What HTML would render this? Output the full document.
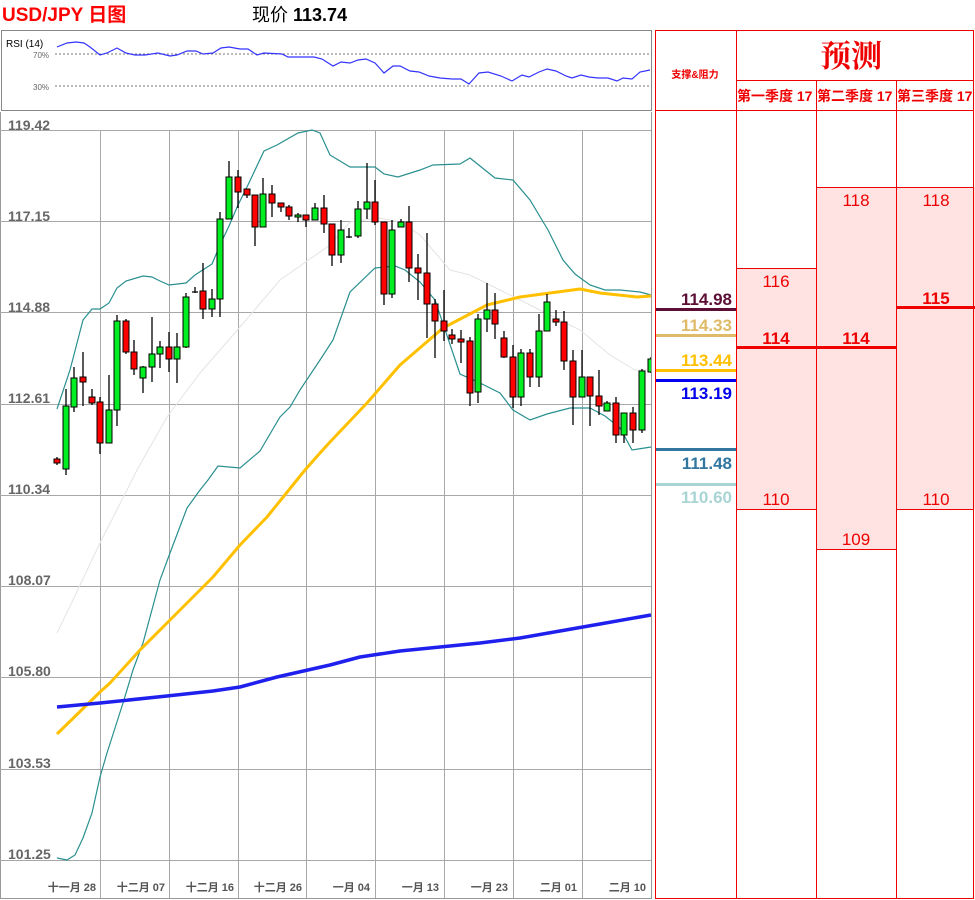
<!DOCTYPE html>
<html><head><meta charset="utf-8"><style>
html,body{margin:0;padding:0;background:#fff;width:975px;height:900px;overflow:hidden}
svg{display:block}
text{font-family:"Liberation Sans","Noto Sans CJK SC",sans-serif}
</style></head><body>
<svg width="975" height="900" viewBox="0 0 975 900" xmlns="http://www.w3.org/2000/svg">
<!-- header -->
<text x="2" y="21" font-size="19" font-weight="bold" fill="#ff0000">USD/JPY 日图</text>
<text x="252" y="21" font-size="18" fill="#000">现价 <tspan font-weight="bold">113.74</tspan></text>

<!-- RSI panel -->
<rect x="1.5" y="30.5" width="650" height="80" fill="#fff" stroke="#888" stroke-width="1"/>
<text x="6" y="47" font-size="10" fill="#000">RSI (14)</text>
<text x="33" y="58" font-size="8" fill="#666">70%</text>
<text x="33" y="90" font-size="8" fill="#666">30%</text>
<line x1="55" y1="54" x2="651" y2="54" stroke="#777" stroke-dasharray="2,2"/>
<line x1="55" y1="86" x2="651" y2="86" stroke="#777" stroke-dasharray="2,2"/>
<polyline fill="none" stroke="#3333ff" stroke-width="1.2" points="57,47 67,43 76,42 84,43 90,47 100,55 107,53 117,48 126,53 135,55 145,55 158,53 170,56 177,55 187,51 196,51 203,54 213,53 221,48 229,47 240,49 248,49 257,55 264,53 282,54 288,57 303,57 314,57 322,59 333,66 341,62 350,63 358,60 366,59 375,63 384,73 393,66 400,66 410,71 419,72 429,76 440,78 452,79 461,79 469,84 479,73 488,72 501,76 512,81 522,75 529,77 539,72 547,69 556,71 566,76 572,78 581,75 589,77 598,78 608,78 617,81 623,78 632,79 640,72 650,70"/>

<!-- main chart frame -->
<line x1="0.5" y1="112" x2="0.5" y2="898" stroke="#999"/>
<line x1="0" y1="898.5" x2="652" y2="898.5" stroke="#999"/>
<!-- grid -->
<g stroke="#a8a8a8" stroke-width="1">
<line x1="0" y1="130.5" x2="651" y2="130.5"/>
<line x1="0" y1="221.5" x2="651" y2="221.5"/>
<line x1="0" y1="312.5" x2="651" y2="312.5"/>
<line x1="0" y1="404.5" x2="651" y2="404.5"/>
<line x1="0" y1="495.5" x2="651" y2="495.5"/>
<line x1="0" y1="586.5" x2="651" y2="586.5"/>
<line x1="0" y1="677.5" x2="651" y2="677.5"/>
<line x1="0" y1="769.5" x2="651" y2="769.5"/>
<line x1="0" y1="860.5" x2="651" y2="860.5"/>
<line x1="100.5" y1="130" x2="100.5" y2="898"/>
<line x1="169.5" y1="130" x2="169.5" y2="898"/>
<line x1="238.5" y1="130" x2="238.5" y2="898"/>
<line x1="306.5" y1="130" x2="306.5" y2="898"/>
<line x1="375.5" y1="130" x2="375.5" y2="898"/>
<line x1="444.5" y1="130" x2="444.5" y2="898"/>
<line x1="513.5" y1="130" x2="513.5" y2="898"/>
<line x1="582.5" y1="130" x2="582.5" y2="898"/>
</g>
<g font-size="14" font-weight="bold" fill="#666">
<text x="8" y="130">119.42</text>
<text x="8" y="221">117.15</text>
<text x="8" y="312">114.88</text>
<text x="8" y="403">112.61</text>
<text x="8" y="494">110.34</text>
<text x="8" y="585">108.07</text>
<text x="8" y="676">105.80</text>
<text x="8" y="768">103.53</text>
<text x="8" y="859">101.25</text>
</g>
<g font-size="11" font-weight="bold" fill="#555" text-anchor="end">
<text x="96" y="891">十一月 28</text>
<text x="165" y="891">十二月 07</text>
<text x="234" y="891">十二月 16</text>
<text x="302" y="891">十二月 26</text>
<text x="370" y="891">一月 04</text>
<text x="439" y="891">一月 13</text>
<text x="508" y="891">一月 23</text>
<text x="577" y="891">二月 01</text>
<text x="646" y="891">二月 10</text>
</g>

<!-- indicator lines -->
<polyline fill="none" stroke="#e4e4e4" stroke-width="1" points="57,633 73,600 100,543 127,490 137,470 167,417 200,373 240,327 280,280 330,245 350,222 380,218 400,222 420,235 450,270 470,275 500,290 520,300 540,310 560,320 580,330 610,355 635,370 651,370"/>
<polyline fill="none" stroke="#2a8f8f" stroke-width="1.2" points="57,409 70,370 83,320 92,309 100,309 109,303 117,288 126,281 143,276 152,277 160,281 169,285 186,283 195,275 212,264 220,245 229,226 238,205 247,187 264,151 277,145 298,133 312,130 320,133 330,155 350,167 375,167 384,174 398,177 420,170 433,165 460,164 470,158 495,178 513,180 530,200 548,230 563,260 575,274 590,285 605,290 620,290 640,292 651,295"/>
<polyline fill="none" stroke="#2a8f8f" stroke-width="1.2" points="57,858 67,860 75,855 83,838 92,813 100,777 107,753 123,703 133,670 143,643 160,580 170,553 187,508 200,490 208,480 218,466 240,468 260,451 280,417 290,407 300,390 310,375 320,360 333,340 350,292 375,268 395,266 405,270 420,282 435,300 460,374 478,382 500,393 513,410 530,420 547,414 570,408 590,408 605,416 620,428 632,450 651,447"/>
<polyline fill="none" stroke="#ffc000" stroke-width="3" stroke-linejoin="round" points="57,734 100,692 110,683 140,650 170,620 187,603 213,577 240,545 267,517 305,470 320,453 330,442 367,403 400,365 443,328 487,305 520,297 580,289 600,293 637,297 651,296"/>
<polyline fill="none" stroke="#2020ee" stroke-width="3.5" stroke-linejoin="round" points="57,707 100,703 167,696 213,691 240,687 277,677 330,665 360,657 400,651 440,647 480,643 520,638 560,631 600,624 651,615"/>

<!-- candles -->
<path fill="none" stroke="#000" stroke-width="1.3" d="M57 457V465M66 389V475M74 367V412M83 352V406M92 389V405M100 397V454M109 375V443M117 315V426M126 319V354M134 340V375M143 366V393M152 317V382M160 341V368M169 332V372M177 333V383M186 293V348M195 287V293M192 292H198M203 263V319M212 289V317M220 212V317M229 161V219M238 170V208M247 189V198M255 195V246M263 178V227M272 185V217M281 203V212M289 205V220M298 213V222M306 215V227M315 203V220M324 195V233M332 224V266M341 220V263M349 228V238M346 237H352M358 201V238M367 163V219M375 180V225M384 222V305M392 220V298M401 219V227M409 206V282M418 254V300M427 233V338M435 299V358M444 290V341M452 329V344M461 330V363M470 337V406M478 314V403M487 283V332M495 293V339M504 331V358M513 345V408M521 349V406M530 349V387M539 314V387M547 294V331M556 310V326M564 311V370M573 350V425M582 350V397M590 377V426M599 370V415M607 401V411M616 397V443M624 413V443M633 407V443M642 369V433M651 357V373"/>
<g stroke="#000" stroke-width="1" fill="#ff0000">
<rect x="54" y="459" width="6" height="4"/><rect x="80" y="377" width="6" height="5"/><rect x="89" y="397" width="6" height="6"/><rect x="97" y="402" width="6" height="41"/><rect x="123" y="321" width="6" height="31"/><rect x="131" y="352" width="6" height="17"/><rect x="166" y="347" width="6" height="12"/><rect x="200" y="291" width="6" height="18"/><rect x="235" y="177" width="6" height="15"/><rect x="244" y="189" width="6" height="6"/><rect x="252" y="195" width="6" height="32"/><rect x="269" y="194" width="6" height="9"/><rect x="278" y="203" width="6" height="4"/><rect x="286" y="207" width="6" height="9"/><rect x="303" y="215" width="6" height="5"/><rect x="321" y="208" width="6" height="16"/><rect x="329" y="224" width="6" height="31"/><rect x="372" y="202" width="6" height="20"/><rect x="381" y="222" width="6" height="72"/><rect x="406" y="222" width="6" height="46"/><rect x="415" y="268" width="6" height="5"/><rect x="424" y="273" width="6" height="31"/><rect x="432" y="304" width="6" height="17"/><rect x="441" y="321" width="6" height="10"/><rect x="449" y="335" width="6" height="4"/><rect x="458" y="339" width="6" height="3"/><rect x="467" y="341" width="6" height="52"/><rect x="492" y="310" width="6" height="14"/><rect x="501" y="338" width="6" height="19"/><rect x="510" y="357" width="6" height="40"/><rect x="527" y="353" width="6" height="24"/><rect x="553" y="319" width="6" height="3"/><rect x="561" y="322" width="6" height="39"/><rect x="570" y="361" width="6" height="36"/><rect x="587" y="377" width="6" height="19"/><rect x="596" y="396" width="6" height="10"/><rect x="613" y="403" width="6" height="32"/><rect x="630" y="413" width="6" height="17"/>
</g>
<g stroke="#000" stroke-width="1" fill="#00ee22">
<rect x="63" y="406" width="6" height="63"/><rect x="71" y="378" width="6" height="29"/><rect x="106" y="410" width="6" height="33"/><rect x="114" y="321" width="6" height="89"/><rect x="140" y="367" width="6" height="11"/><rect x="149" y="354" width="6" height="13"/><rect x="157" y="347" width="6" height="7"/><rect x="174" y="347" width="6" height="12"/><rect x="183" y="297" width="6" height="50"/><rect x="209" y="299" width="6" height="10"/><rect x="217" y="219" width="6" height="80"/><rect x="226" y="177" width="6" height="42"/><rect x="260" y="194" width="6" height="33"/><rect x="295" y="215" width="6" height="2"/><rect x="312" y="208" width="6" height="12"/><rect x="338" y="230" width="6" height="25"/><rect x="355" y="209" width="6" height="27"/><rect x="364" y="202" width="6" height="7"/><rect x="389" y="230" width="6" height="64"/><rect x="398" y="222" width="6" height="5"/><rect x="475" y="319" width="6" height="73"/><rect x="484" y="310" width="6" height="9"/><rect x="518" y="353" width="6" height="44"/><rect x="536" y="331" width="6" height="46"/><rect x="544" y="302" width="6" height="29"/><rect x="579" y="377" width="6" height="20"/><rect x="604" y="403" width="6" height="8"/><rect x="621" y="413" width="6" height="22"/><rect x="639" y="371" width="6" height="59"/><rect x="648" y="359" width="6" height="13"/>
</g>
<rect x="652" y="112" width="3" height="788" fill="#fff"/>
<line x1="651.5" y1="112" x2="651.5" y2="898" stroke="#999"/>

<!-- right panel -->
<rect x="736" y="268" width="80" height="241" fill="#ffe3e3"/>
<rect x="816" y="187" width="80" height="362" fill="#ffe3e3"/>
<rect x="896" y="187" width="79" height="322" fill="#ffe3e3"/>
<g stroke="#ee0000" stroke-width="1" fill="none">
<rect x="655.5" y="30.5" width="318" height="868"/>
<line x1="736.5" y1="30" x2="736.5" y2="899"/>
<line x1="816.5" y1="80" x2="816.5" y2="899"/>
<line x1="896.5" y1="80" x2="896.5" y2="899"/>
<line x1="736" y1="80.5" x2="974" y2="80.5"/>
<line x1="655" y1="110.5" x2="974" y2="110.5"/>
<line x1="736" y1="268.5" x2="816" y2="268.5"/>
<line x1="736" y1="509.5" x2="816" y2="509.5"/>
<line x1="816" y1="187.5" x2="974" y2="187.5"/>
<line x1="816" y1="549.5" x2="896" y2="549.5"/>
<line x1="896" y1="509.5" x2="974" y2="509.5"/>
</g>
<text x="851" y="67" font-size="31" font-weight="bold" fill="#ee0000" text-anchor="middle" style="font-family:'Noto Serif CJK SC',serif">预测</text>
<text x="695" y="78" font-size="10" font-weight="bold" fill="#ee0000" text-anchor="middle">支撑&amp;阻力</text>
<g font-size="14" font-weight="bold" fill="#ee0000">
<text x="737" y="101">第一季度 17</text>
<text x="817" y="101">第二季度 17</text>
<text x="897" y="101">第三季度 17</text>
</g>
<!-- support/resistance lines -->
<rect x="656" y="308" width="80" height="3" fill="#5c0f35"/>
<rect x="656" y="334" width="80" height="3" fill="#dfba68"/>
<rect x="656" y="369" width="80" height="3" fill="#ffc000"/>
<rect x="656" y="379" width="80" height="3" fill="#0000ee"/>
<rect x="656" y="448" width="80" height="3" fill="#31779f"/>
<rect x="656" y="483" width="80" height="3" fill="#a8d4d4"/>
<g font-size="17" font-weight="bold" text-anchor="end">
<text x="732" y="305" fill="#5c0f35">114.98</text>
<text x="732" y="331" fill="#dfba68">114.33</text>
<text x="732" y="366" fill="#ffc000">113.44</text>
<text x="732" y="399" fill="#0000ee">113.19</text>
<text x="732" y="469" fill="#31779f">111.48</text>
<text x="732" y="503" fill="#a8d4d4">110.60</text>
</g>
<rect x="736" y="346" width="160" height="3" fill="#ee0000"/>
<rect x="896" y="306" width="79" height="3" fill="#ee0000"/>
<g font-size="17" fill="#ee0000" text-anchor="middle">
<text x="776" y="287">116</text>
<text x="776" y="344" font-weight="bold">114</text>
<text x="776" y="505">110</text>
<text x="856" y="206">118</text>
<text x="856" y="344" font-weight="bold">114</text>
<text x="856" y="545">109</text>
<text x="936" y="206">118</text>
<text x="936" y="304" font-weight="bold">115</text>
<text x="936" y="505">110</text>
</g>
</svg>
</body></html>
